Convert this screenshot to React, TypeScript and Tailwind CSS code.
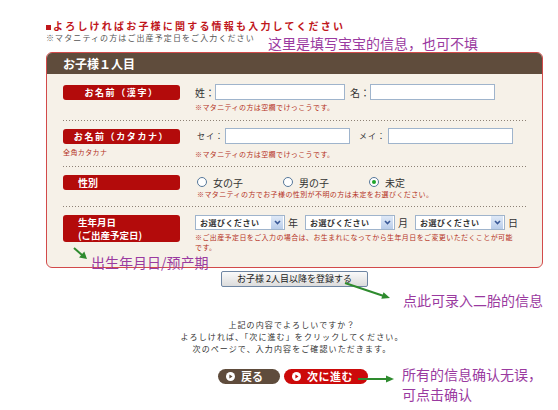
// お子様情報 入力フォーム（注釈つきスクリーンショット）
import React from "react";

const JP = "font-['Noto_Sans_CJK_JP','Noto_Sans_CJK_SC',sans-serif]";
const SC = "font-['Noto_Sans_CJK_SC',sans-serif]";

function Label({ children, tall, left }: { children: React.ReactNode; tall?: boolean; left?: boolean }) {
  return (
    <div
      className={
        "rounded-[3px] bg-[#b30b0b] text-white font-bold " +
        (tall
          ? "h-[27px] flex flex-col justify-center gap-px pl-[15px] text-[9.5px] leading-[12px]"
          : left
          ? "h-[15px] flex items-center pl-[15px] text-[10px]"
          : "h-[15px] flex items-center justify-center text-[9px] tracking-[1.6px]")
      }
    >
      {children}
    </div>
  );
}

function Note({ children, className = "" }: { children: React.ReactNode; className?: string }) {
  return (
    <p className={"text-[7px] leading-[10px] tracking-[0.4px] text-[#b5321e] " + className}>{children}</p>
  );
}

function Dots() {
  return (
    <div className="h-px mx-[16px] bg-[linear-gradient(to_right,#8d8175_1px,transparent_1px)] bg-[length:3px_1px] bg-repeat-x" />
  );
}

function Radio({ label, checked }: { label: string; checked?: boolean }) {
  return (
    <div className="w-[86px] flex items-center gap-[6px]">
      <span className="w-[10px] h-[10px] rounded-full border border-[#56789a] bg-white flex items-center justify-center">
        {checked && <span className="w-[4px] h-[4px] rounded-full bg-[#1fa52a]" />}
      </span>
      <span className="text-[10px] text-[#333]">{label}</span>
    </div>
  );
}

function Select() {
  return (
    <div className="w-[90px] h-[15px] border border-[#9fb4cc] bg-white flex items-center">
      <span className="flex-1 pl-[4px] text-[8px] font-bold text-[#333] tracking-[0.5px] leading-none">お選びください</span>
      <span className="w-[12px] h-[13px] bg-[linear-gradient(#dfe9f7,#b9cdea)] flex items-center justify-center mr-px">
        <svg width="7" height="5" viewBox="0 0 7 5">
          <path d="M1 1 L3.5 3.5 L6 1" stroke="#3a5a98" strokeWidth="1.6" fill="none" />
        </svg>
      </span>
    </div>
  );
}

function PlayIcon({ color }: { color: string }) {
  return (
    <svg width="9" height="9" viewBox="0 0 9 9">
      <circle cx="4.5" cy="4.5" r="4.5" fill="#fff" />
      <path d="M3.4 2.4 L6.5 4.5 L3.4 6.6 Z" fill={color} />
    </svg>
  );
}

export default function App() {
  return (
    <div className={`relative w-[558px] h-[410px] bg-white overflow-hidden ${JP}`}>
      <div className="w-[543px] pl-[46px] pt-[20px]">
        {/* 見出し */}
        <p className="text-[10px] leading-[12px] font-bold tracking-[2.2px] text-[#c0161b]">
          <span className="inline-block w-[5px] h-[5px] bg-[#c0161b] mr-[2px] align-middle" />
          よろしければお子様に関する情報も入力してください
        </p>
        <p className="text-[8px] leading-[11px] tracking-[1.1px] text-[#555]">※マタニティの方はご出産予定日をご入力ください</p>

        {/* 入力パネル */}
        <div className="mt-[9px] border border-[#d24a4a] rounded-[6px] overflow-hidden bg-[#f6f1e8]">
          <div className="h-[21px] bg-[#5f4c3c] flex items-center pl-[16px] text-white text-[12px] font-bold">
            お子様１人目
          </div>

          {/* お名前（漢字） */}
          <div className="h-[46px] pt-[11px] px-[16px] grid grid-cols-[117px_1fr] gap-x-[15px]">
            <Label>お名前（漢字）</Label>
            <div>
              <div className="flex items-center h-[16px] -mt-px">
                <span className="w-[20px] text-[10px] text-[#333]">姓：</span>
                <span className="w-[130px] h-[16px] border border-[#9fb4cc] bg-white" />
                <span className="ml-[5px] w-[20px] text-[10px] text-[#333]">名：</span>
                <span className="w-[125px] h-[16px] border border-[#9fb4cc] bg-white" />
              </div>
              <Note className="mt-[2px]">※マタニティの方は空欄でけっこうです。</Note>
            </div>
          </div>
          <Dots />

          {/* お名前（カタカナ） */}
          <div className="h-[45px] pt-[8px] px-[16px] grid grid-cols-[117px_1fr] gap-x-[15px]">
            <div>
              <Label>お名前（カタカナ）</Label>
              <Note className="mt-[3px]">全角カタカナ</Note>
            </div>
            <div>
              <div className="flex items-center h-[16px] -mt-px">
                <span className="w-[30px] pl-[2px] text-[8px] tracking-[1px] text-[#333]">セイ：</span>
                <span className="w-[125px] h-[16px] border border-[#9fb4cc] bg-white" />
                <span className="ml-[9px] w-[29px] text-[8px] tracking-[1px] text-[#333]">メイ：</span>
                <span className="w-[125px] h-[16px] border border-[#9fb4cc] bg-white" />
              </div>
              <Note className="mt-[5px]">※マタニティの方は空欄でけっこうです。</Note>
            </div>
          </div>
          <Dots />

          {/* 性別 */}
          <div className="h-[39px] pt-[8px] px-[16px] grid grid-cols-[117px_1fr] gap-x-[15px]">
            <Label left>性別</Label>
            <div className="pl-[2px]">
              <div className="flex items-center h-[14px]">
                <Radio label="女の子" />
                <Radio label="男の子" />
                <Radio label="未定" checked />
              </div>
              <Note>※マタニティの方でお子様の性別が不明の方は未定をお選びください。</Note>
            </div>
          </div>
          <Dots />

          {/* 生年月日 */}
          <div className="h-[60px] pt-[8px] px-[16px] grid grid-cols-[117px_1fr] gap-x-[15px]">
            <Label tall>
              <span>生年月日</span>
              <span>(ご出産予定日)</span>
            </Label>
            <div>
              <div className="flex items-center h-[15px]">
                <Select />
                <span className="w-[20px] pl-[3px] text-[10px] text-[#333]">年</span>
                <Select />
                <span className="w-[20px] pl-[3px] text-[10px] text-[#333]">月</span>
                <Select />
                <span className="pl-[3px] text-[10px] text-[#333]">日</span>
              </div>
              <Note className="mt-[2px] w-[322px]">
                ※ご出産予定日をご入力の場合は、お生まれになってから生年月日をご変更いただくことが可能です。
              </Note>
            </div>
          </div>
        </div>

        {/* 2人目以降 */}
        <button className="mt-[3px] ml-[175px] w-[147px] h-[16px] border border-[#6f86a3] rounded-[2px] bg-[linear-gradient(#fafafa,#dcdcdc)] text-[9px] text-[#222] flex items-center justify-center">
          お子様 2人目以降を登録する
        </button>

        {/* 確認文 */}
        <div className="mt-[32px] pr-[5px] flex flex-col items-center text-[8px] leading-[12px] tracking-[1.1px] text-[#333]">
          <p>上記の内容でよろしいですか？</p>
          <p>よろしければ、「次に進む」をクリックしてください。</p>
          <p>次のページで、入力内容をご確認いただきます。</p>
        </div>

        <div className="mt-[14px] ml-[172px] flex gap-[4px]">
          <button className="w-[62px] h-[15px] rounded-full bg-[#5f4c3c] flex items-center pl-[8px] gap-[6px] text-white text-[11px] font-bold">
            <PlayIcon color="#5f4c3c" />
            戻る
          </button>
          <button className="w-[84px] h-[15px] rounded-full bg-[#cc0a0a] flex items-center pl-[8px] gap-[6px] text-white text-[11px] font-bold tracking-[0.5px]">
            <PlayIcon color="#cc0a0a" />
            次に進む
          </button>
        </div>
      </div>

      {/* 注釈（紫の文字と緑の矢印） */}
      <p className={`absolute left-[268px] top-[35px] text-[14px] leading-[16px] text-[#9a3aa0] ${SC}`}>
        这里是填写宝宝的信息，也可不填
      </p>
      <p className={`absolute left-[91px] top-[254px] text-[14px] leading-[16px] text-[#9a3aa0] ${SC}`}>
        出生年月日/预产期
      </p>
      <p className={`absolute left-[403px] top-[292px] text-[14px] leading-[16px] text-[#9a3aa0] ${SC}`}>
        点此可录入二胎的信息
      </p>
      <div className={`absolute left-[402px] top-[364px] text-[14px] leading-[20px] text-[#9a3aa0] ${SC}`}>
        <p>所有的信息确认无误，</p>
        <p>可点击确认</p>
      </div>
      <svg className="absolute inset-0 pointer-events-none" width="558" height="410">
        <line x1="74" y1="248" x2="82" y2="255" stroke="#2e8b2e" strokeWidth="2" />
        <polygon points="87,259 84.3,251.5 79.1,257.5" fill="#2e8b2e" />
        <line x1="345" y1="283" x2="383" y2="295.7" stroke="#2e8b2e" strokeWidth="2" />
        <polygon points="390,298 383.5,292.2 381.3,298.8" fill="#2e8b2e" />
        <line x1="358" y1="379" x2="387" y2="379" stroke="#2e8b2e" strokeWidth="2" />
        <polygon points="394,379 386,375.5 386,382.5" fill="#2e8b2e" />
      </svg>
    </div>
  );
}
